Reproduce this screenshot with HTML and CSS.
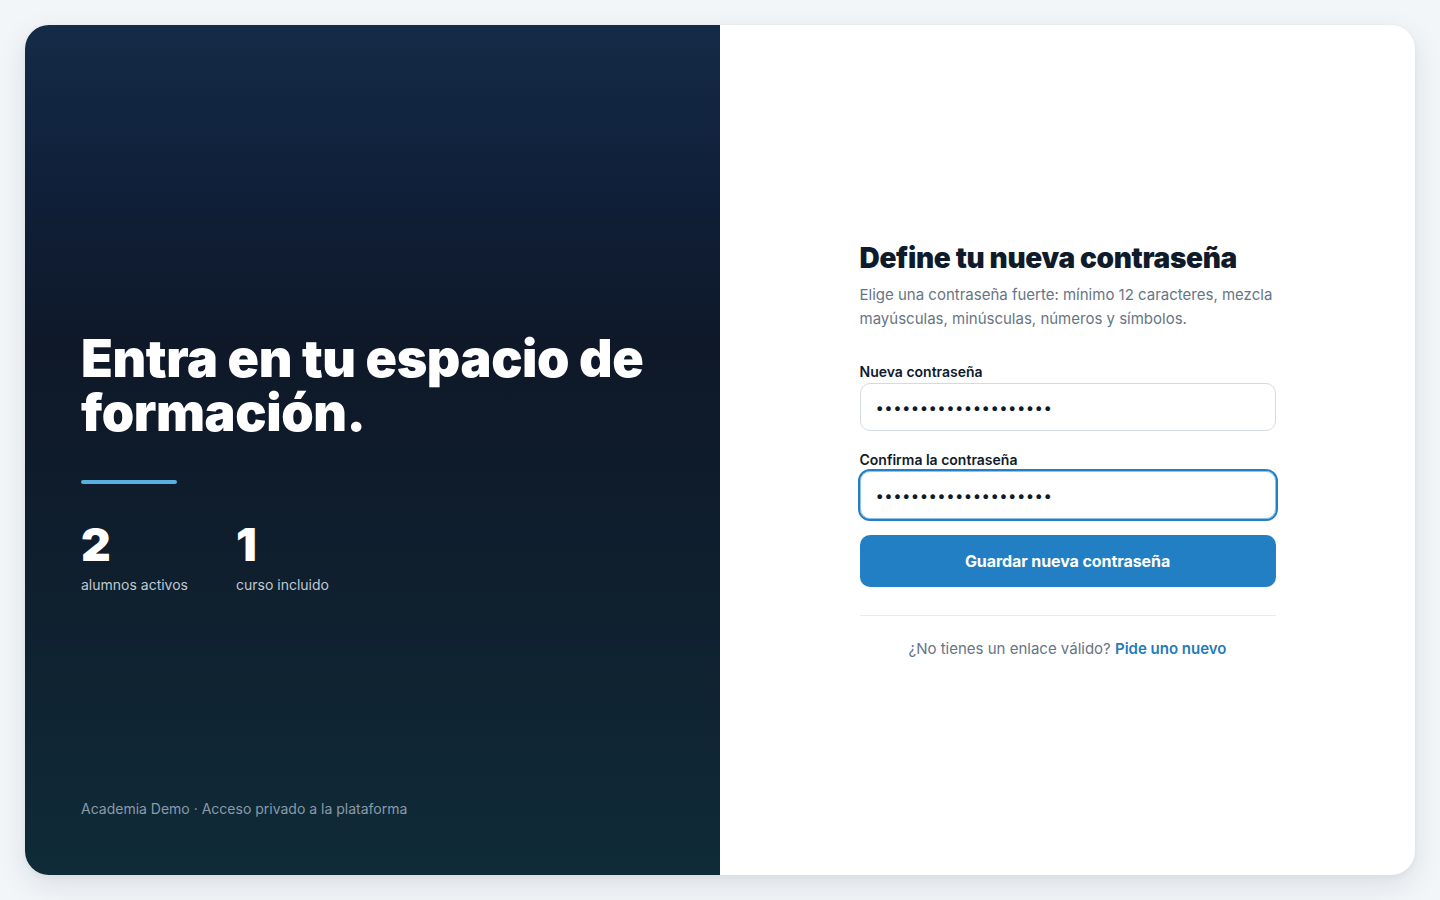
FILE: index.html
```html
<!DOCTYPE html>
<html lang="es">
<head>
<meta charset="utf-8">
<title>Define tu nueva contraseña</title>
<link rel="stylesheet" href="styles.css">
</head>
<body>
<main class="card">
  <section class="hero">
    <div class="hero-main">
      <h1 class="hero-title">Entra en tu espacio de formación.</h1>
      <div class="accent"></div>
      <div class="stats">
        <div class="stat">
          <div class="stat-num">2</div>
          <div class="stat-label">alumnos activos</div>
        </div>
        <div class="stat">
          <div class="stat-num">1</div>
          <div class="stat-label">curso incluido</div>
        </div>
      </div>
    </div>
    <p class="hero-foot">Academia Demo · Acceso privado a la plataforma</p>
  </section>
  <section class="panel">
    <form class="form">
      <h2 class="form-title">Define tu nueva contraseña</h2>
      <p class="form-sub">Elige una contraseña fuerte: mínimo 12 caracteres, mezcla mayúsculas, minúsculas, números y símbolos.</p>
      <label class="field">
        <span class="label">Nueva contraseña</span>
        <input class="input" type="password" value="abcdefghijklmnopqrst">
      </label>
      <label class="field field-focus">
        <span class="label">Confirma la contraseña</span>
        <input class="input input-focus" type="password" value="abcdefghijklmnopqrst">
      </label>
      <button class="btn" type="button">Guardar nueva contraseña</button>
      <div class="divider"></div>
      <p class="alt">¿No tienes un enlace válido? <a class="alt-link" href="#">Pide uno nuevo</a></p>
    </form>
  </section>
</main>
</body>
</html>
```
FILE: styles.css
```css
* { box-sizing: border-box; }
html, body { margin: 0; height: 100%; }
body {
  background: #f2f6f9;
  font-family: Inter, "Noto Sans", sans-serif;
  padding: 25px;
}
.card {
  height: 850px;
  display: grid;
  grid-template-columns: 695px 1fr;
  border-radius: 24px;
  overflow: hidden;
  background: #ffffff;
  box-shadow: 0 10px 30px rgba(15, 30, 50, 0.10), 0 2px 6px rgba(15, 30, 50, 0.05);
}
.hero {
  background: linear-gradient(180deg, #142b47 0%, #10203a 18%, #0e1828 38%, #0f1f2e 65%, #0f2b38 100%);
  color: #ffffff;
  padding: 56px;
  display: flex;
  flex-direction: column;
}
.hero-main {
  flex: 1;
  display: flex;
  flex-direction: column;
  justify-content: center;
  padding-top: 46px;
}
.hero-title {
  margin: 0;
  font-size: 52px;
  line-height: 54px;
  font-weight: 900;
  letter-spacing: -0.008em;
  max-width: 600px;
}
.accent {
  width: 96px;
  height: 4px;
  border-radius: 2px;
  background: #5aaee0;
  margin-top: 40px;
}
.stats {
  display: flex;
  gap: 48px;
  margin-top: 36px;
}
.stat-num {
  font-size: 46px;
  line-height: 48px;
  font-weight: 900;
  letter-spacing: -0.02em;
}
.stat-label {
  margin-top: 7px;
  font-size: 14px;
  line-height: 20px;
  color: #bfc9d3;
}
.hero-foot {
  margin: 0;
  font-size: 14px;
  line-height: 20px;
  color: #8a9aa8;
}
.panel {
  display: flex;
  align-items: center;
  justify-content: center;
}
.form {
  width: 416px;
  display: flex;
  flex-direction: column;
}
.form-title {
  margin: 0;
  font-size: 28px;
  line-height: 32px;
  font-weight: 900;
  letter-spacing: -0.012em;
  color: #0f1b2a;
}
.form-sub {
  margin: 9px 0 0;
  font-size: 15px;
  line-height: 24px;
  color: #667585;
}
.field {
  display: flex;
  flex-direction: column;
  margin-top: 32px;
}
.field-focus { margin-top: 20px; }
.label {
  font-size: 14px;
  line-height: 18px;
  font-weight: 600;
  color: #0f1b2a;
  margin-bottom: 2px;
}
.input {
  height: 48px;
  border: 1px solid #d3dae2;
  border-radius: 10px;
  padding: 0 15px;
  font-family: Inter, "Noto Sans", sans-serif;
  font-size: 15px;
  letter-spacing: 0.4px;
  color: #0f1b2a;
  background: #ffffff;
  outline: none;
}
.input-focus {
  border: 1px solid #8fc2e6;
  outline: 2px solid #237fc4;
  outline-offset: 0;
  box-shadow: inset 0 0 0 1px #ffffff;
}
.btn {
  margin-top: 16px;
  height: 52px;
  border: none;
  border-radius: 10px;
  background: #237fc4;
  color: #ffffff;
  font-family: Inter, "Noto Sans", sans-serif;
  font-size: 16px;
  font-weight: 700;
  letter-spacing: -0.005em;
}
.divider {
  height: 1px;
  background: #e8ecf0;
  margin-top: 28px;
}
.alt {
  margin: 24px 0 0;
  text-align: center;
  font-size: 15px;
  line-height: 18px;
  color: #667585;
}
.alt-link {
  color: #1f7bbb;
  font-weight: 600;
  text-decoration: none;
}
```
